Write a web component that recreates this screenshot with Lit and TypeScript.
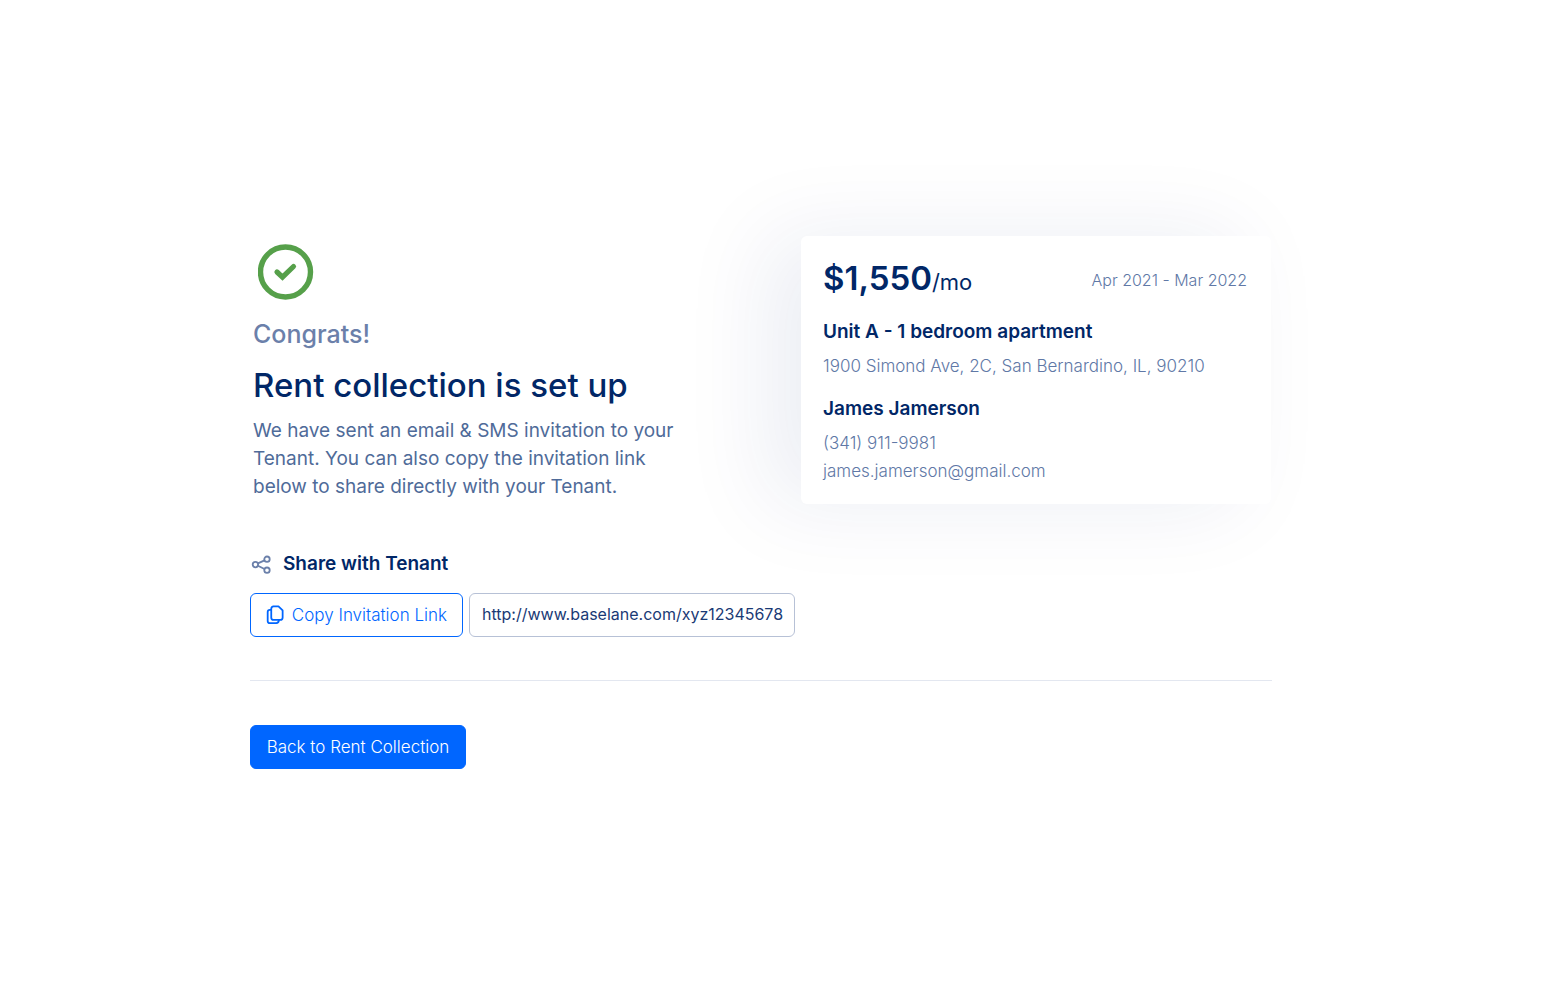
import { LitElement, html, css } from "lit";
import { customElement, property } from "lit/decorators.js";

@customElement("lease-card")
class LeaseCard extends LitElement {
  @property() rent = "$1,550";
  @property() term = "Apr 2021 - Mar 2022";

  static styles = css`
    :host {
      display: block;
      box-sizing: border-box;
      padding: 24px 24px 19px 22px;
      border-radius: 6px;
      background: #fff;
      color: #012767;
      box-shadow: -34px 0 88px rgba(13, 33, 110, 0.08);
    }
    .top {
      display: flex;
      align-items: center;
      justify-content: space-between;
      height: 40px;
      margin-bottom: 18px;
    }
    .rent {
      margin: 0;
      font-size: 22px;
      line-height: 40px;
    }
    .amount {
      font-size: 33px;
      font-weight: 600;
    }
    .term,
    .line {
      margin: 0;
      font-size: 16px;
      line-height: 28px;
      font-weight: 300;
      color: #6078a6;
    }
    .line {
      font-size: 17px;
    }
    .name {
      margin: 0 0 6px;
      font-size: 19px;
      line-height: 28px;
      font-weight: 600;
    }
    .line + .name {
      margin-top: 15px;
    }
  `;

  render() {
    return html`
      <div class="top">
        <p class="rent"><span class="amount">${this.rent}</span>/mo</p>
        <p class="term">${this.term}</p>
      </div>
      <h2 class="name">Unit A - 1 bedroom apartment</h2>
      <p class="line">1900 Simond Ave, 2C, San Bernardino, IL, 90210</p>
      <h2 class="name">James Jamerson</h2>
      <p class="line">(341) 911-9981</p>
      <p class="line">james.jamerson@gmail.com</p>
    `;
  }
}

@customElement("app-root")
class AppRoot extends LitElement {
  static styles = css`
    :host {
      display: block;
      box-sizing: border-box;
      min-height: 100vh;
      padding: 236px 274px 80px 250px;
      background: #fff;
      font-family: Inter, "Open Sans", sans-serif;
      color: #012767;
    }
    .summary {
      display: grid;
      grid-template-columns: minmax(0, 1fr) 470px;
      align-items: start;
      padding-right: 1px;
    }
    .intro {
      padding: 8px 0 0 3px;
    }
    .check {
      display: block;
      margin: 0 0 18px 5px;
    }
    .congrats {
      margin: 0 0 15px;
      font-size: 25px;
      line-height: 32px;
      font-weight: 500;
      color: #6b80aa;
    }
    .title {
      margin: 0 0 12px;
      font-size: 33px;
      line-height: 40px;
      font-weight: 500;
    }
    .text {
      margin: 0;
      max-width: 440px;
      font-size: 19px;
      line-height: 28px;
      color: #4f6b99;
    }
    .share {
      display: flex;
      align-items: center;
      gap: 12px;
      margin: 46px 0 15px 1px;
      font-size: 19px;
      line-height: 28px;
      font-weight: 600;
    }
    .actions {
      display: flex;
      gap: 6px;
      padding-bottom: 43px;
      border-bottom: 1px solid #e3e7f0;
      margin-bottom: 44px;
    }
    .button,
    .link {
      box-sizing: border-box;
      height: 44px;
      border-radius: 6px;
      font: 400 16px/24px Inter, "Open Sans", sans-serif;
    }
    .button {
      display: inline-flex;
      align-items: center;
      justify-content: center;
      gap: 8px;
      border: 1px solid #0066ff;
      padding: 0 15px;
      background: #fff;
      color: #0066ff;
      font-size: 17px;
      font-weight: 300;
      white-space: nowrap;
      cursor: pointer;
    }
    .copy {
      width: 213px;
    }
    .back {
      width: 216px;
      background: #0066ff;
      color: #fff;
    }
    .link {
      width: 326px;
      padding: 0 6px 3px 12px;
      border: 1px solid #b7c1d6;
      background: #fff;
      color: #1a3a75;
    }
  `;

  render() {
    return html`
      <main>
        <section class="summary">
          <div class="intro">
            <svg class="check" width="56" height="56" viewBox="0 0 56 56" fill="none" stroke="#56a04a" aria-hidden="true">
              <circle cx="27.5" cy="28" r="25" stroke-width="5.4" />
              <path d="M19 28 L24.5 33.2 L35.5 22.5" stroke-width="5.2" stroke-linecap="round" stroke-linejoin="miter" />
            </svg>
            <p class="congrats">Congrats!</p>
            <h1 class="title">Rent collection is set up</h1>
            <p class="text">
              We have sent an email &amp; SMS invitation to your Tenant. You can also copy the invitation link below to
              share directly with your Tenant.
            </p>
          </div>
          <lease-card></lease-card>
        </section>
        <label class="share" for="invite">
          <svg width="20" height="20" viewBox="0 0 20 20" fill="none" stroke="#6b80aa" stroke-width="1.8" aria-hidden="true">
            <circle cx="4.4" cy="10.6" r="2.7" />
            <circle cx="16" cy="5.2" r="2.7" />
            <circle cx="16" cy="16.2" r="2.7" />
            <path d="M6.9 9.4 L13.5 6.4 M6.9 11.8 L13.5 15" />
          </svg>
          Share with Tenant
        </label>
        <div class="actions">
          <button class="button copy" type="button">
            <svg width="18" height="20" viewBox="0 0 18 20" fill="none" stroke="#0066ff" stroke-width="1.8" stroke-linejoin="round" stroke-linecap="round" aria-hidden="true">
              <path d="M7.2 1.3 H12.6 L16.8 5.4 V12.4 Q16.8 14.9 14.3 14.9 H7.6 Q5.3 14.9 5.3 12.4 V3.8 Q5.3 1.3 7.6 1.3 Z" />
              <path d="M5.1 4.8 H3.9 Q1.7 4.8 1.7 7 V16 Q1.7 18.2 3.9 18.2 H10.4 Q12.8 18.2 13 15.2" />
            </svg>
            Copy Invitation Link
          </button>
          <input class="link" id="invite" type="text" readonly .value=${"http://www.baselane.com/xyz12345678"} />
        </div>
        <button class="button back" type="button">Back to Rent Collection</button>
      </main>
    `;
  }
}
